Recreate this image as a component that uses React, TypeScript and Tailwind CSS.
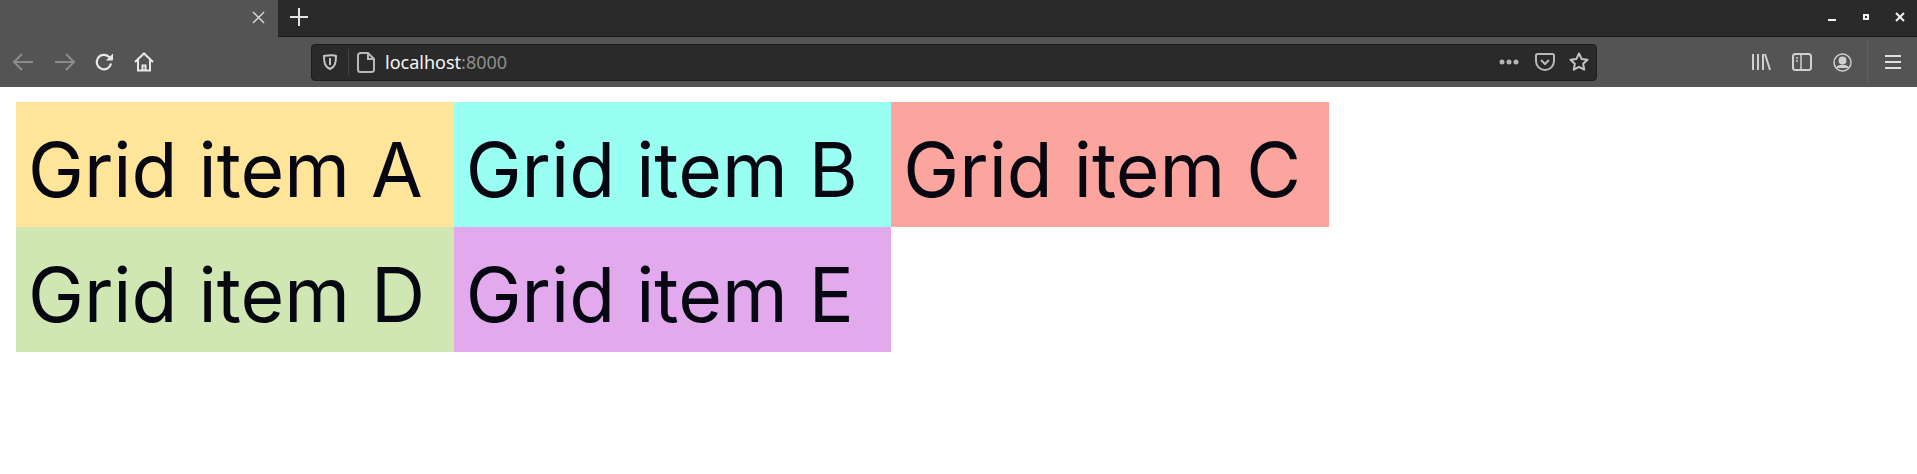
const items = [
  { label: "Grid item A", color: "bg-[#ffe599]" },
  { label: "Grid item B", color: "bg-[#99fff3]" },
  { label: "Grid item C", color: "bg-[#fca59f]" },
  { label: "Grid item D", color: "bg-[#d0e6b3]" },
  { label: "Grid item E", color: "bg-[#e2aaed]" },
];

function TabBar() {
  return (
    <div className="flex h-[37px] bg-[#2a2a2a] border-b border-[#161616]">
      <div className="w-[278px] h-[37px] bg-[#545454] flex items-center justify-end pr-[13px] pb-[3px]">
        <svg width="13" height="13" viewBox="0 0 14 14" stroke="#d8d8d8" strokeWidth="1.5" fill="none">
          <path d="M1 1l12 12M13 1L1 13" />
        </svg>
      </div>
      <div className="ml-[12px] flex items-center pb-[3px]">
        <svg width="18" height="18" viewBox="0 0 18 18" stroke="#e4e4e4" strokeWidth="2" fill="none">
          <path d="M9 0v18M0 9h18" />
        </svg>
      </div>
      <div className="ml-auto flex items-center gap-[22px] pr-[11px] pb-[2px]">
        <svg width="12" height="12" viewBox="0 0 12 12" fill="#f2f2f2"><rect x="2" y="8" width="8" height="2" /></svg>
        <svg width="12" height="12" viewBox="0 0 12 12" fill="none" stroke="#f2f2f2" strokeWidth="2"><rect x="4" y="4" width="4" height="4" /></svg>
        <svg width="12" height="12" viewBox="0 0 12 12" fill="none" stroke="#f2f2f2" strokeWidth="2"><path d="M2 2l8 8M10 2l-8 8" /></svg>
      </div>
    </div>
  );
}

function Toolbar() {
  return (
    <div className="flex items-center h-[50px] bg-[#545454]">
      <div className="flex items-center gap-[20px] pl-[12px] w-[311px]">
        <svg width="22" height="20" viewBox="0 0 22 20" stroke="#8c8c8c" strokeWidth="2" fill="none"><path d="M21 10H2M10 2l-8 8 8 8" /></svg>
        <svg width="22" height="20" viewBox="0 0 22 20" stroke="#8c8c8c" strokeWidth="2" fill="none"><path d="M1 10h19M12 2l8 8-8 8" /></svg>
        <svg className="-ml-[2px]" width="20" height="20" viewBox="0 0 20 20" stroke="#e8e8e8" strokeWidth="2.2" fill="none"><path d="M17 11.5a7.2 7.2 0 1 1-2-6.5l2.5 2.5" /><path d="M18.5 2v6h-6" fill="#e8e8e8" strokeWidth="1" /></svg>
        <svg width="20" height="20" viewBox="0 0 20 20" stroke="#e8e8e8" strokeWidth="2" fill="none"><path d="M1 10l9-8.5L19 10M4 8v10.5h12V8" /><path d="M8.500 18.500v-5h3v5" /></svg>
      </div>
      <div className="w-[1286px] h-[37px] bg-[#2a2a2a] border border-[#1c1c1c] rounded-[4px] flex items-center">
        <svg className="ml-[10px]" width="16" height="18" viewBox="0 0 16 18" fill="none" stroke="#c4c4c4" strokeWidth="2"><path d="M2 3c4 0 8-2 12 0 0 7-1 11-6 13C3 14 2 10 2 3z" /><path d="M8 5v7" /></svg>
        <div className="ml-[10px] w-px h-[26px] bg-[#444444]" />
        <svg className="ml-[8px]" width="18" height="21" viewBox="0 0 18 21" fill="none" stroke="#b8b8b8" strokeWidth="2"><path d="M3.500 1H11l6 6v10.500a2.500 2.500 0 0 1-2.500 2.500h-11A2.500 2.500 0 0 1 1 17.500v-14A2.500 2.500 0 0 1 3.500 1zM11 1v6h6" /></svg>
        <span className="ml-[10px] text-[18px] font-['Noto_Sans',sans-serif] text-[#f5f5f5]">
          localhost<span className="text-[#8e8e8e]">:8000</span>
        </span>
        <div className="ml-auto flex items-center gap-[14px] pr-[7px]">
          <svg className="mr-[2px]" width="20" height="6" viewBox="0 0 20 6" fill="#b4b4b4"><circle cx="3" cy="3" r="2.500" /><circle cx="10" cy="3" r="2.500" /><circle cx="17" cy="3" r="2.500" /></svg>
          <svg width="20" height="18" viewBox="0 0 20 18" fill="none" stroke="#b8b8b8" strokeWidth="2"><path d="M2.500 1h15A1.500 1.500 0 0 1 19 2.500V8a9 9 0 0 1-18 0V2.500A1.500 1.500 0 0 1 2.500 1z" /><path d="M6 7l4 4 4-4" /></svg>
          <svg width="20" height="20" viewBox="0 0 20 20" fill="none" stroke="#c4c4c4" strokeWidth="2" strokeLinejoin="round"><path d="M10 1.500l2.600 5.400 5.900.8-4.300 4.100 1 5.900L10 14.900l-5.200 2.800 1-5.900L1.500 7.700l5.900-.8z" /></svg>
        </div>
      </div>
      <div className="flex-1 flex items-center justify-end h-full">
        <div className="flex items-center gap-[21px] mr-[15px]">
          <svg width="20" height="18" viewBox="0 0 20 18" fill="none" stroke="#d0d0d0" strokeWidth="2"><path d="M2 1v16M7 1v16M12 1v16M14 1l5 16" /></svg>
          <svg width="20" height="18" viewBox="0 0 20 18" fill="none" stroke="#d0d0d0" strokeWidth="2"><rect x="1" y="1" width="18" height="16" rx="2.500" /><path d="M9 1v16M4 5h2M4 8h2" strokeWidth="1.500" /></svg>
          <svg width="19" height="19" viewBox="0 0 19 19" fill="none" stroke="#d0d0d0" strokeWidth="1.500"><circle cx="9.500" cy="9.500" r="8.500" /><circle cx="9.500" cy="7.500" r="3.200" fill="#d0d0d0" /><path d="M4 15c1-3.500 10-3.500 11 0" fill="#d0d0d0" /></svg>
        </div>
        <div className="w-px h-[42px] bg-[#606060]" />
        <div className="flex items-center justify-center w-[49px]">
          <svg width="16" height="16" viewBox="0 0 16 16" stroke="#e0e0e0" strokeWidth="2"><path d="M0 2h16M0 8h16M0 14h16" /></svg>
        </div>
      </div>
    </div>
  );
}

export default function App() {
  return (
    <div className="min-h-screen bg-white overflow-hidden">
      <TabBar />
      <Toolbar />
      <div className="grid grid-cols-[repeat(3,437.67px)] grid-rows-[125px_125px] m-[15px_16px] font-['Inter',sans-serif]">
        {items.map((item) => (
          <div
            key={item.label}
            className={`${item.color} flex items-center pl-[12px] pt-[12px] text-[75px] text-[#070712] whitespace-nowrap`}
          >
            {item.label}
          </div>
        ))}
      </div>
    </div>
  );
}
